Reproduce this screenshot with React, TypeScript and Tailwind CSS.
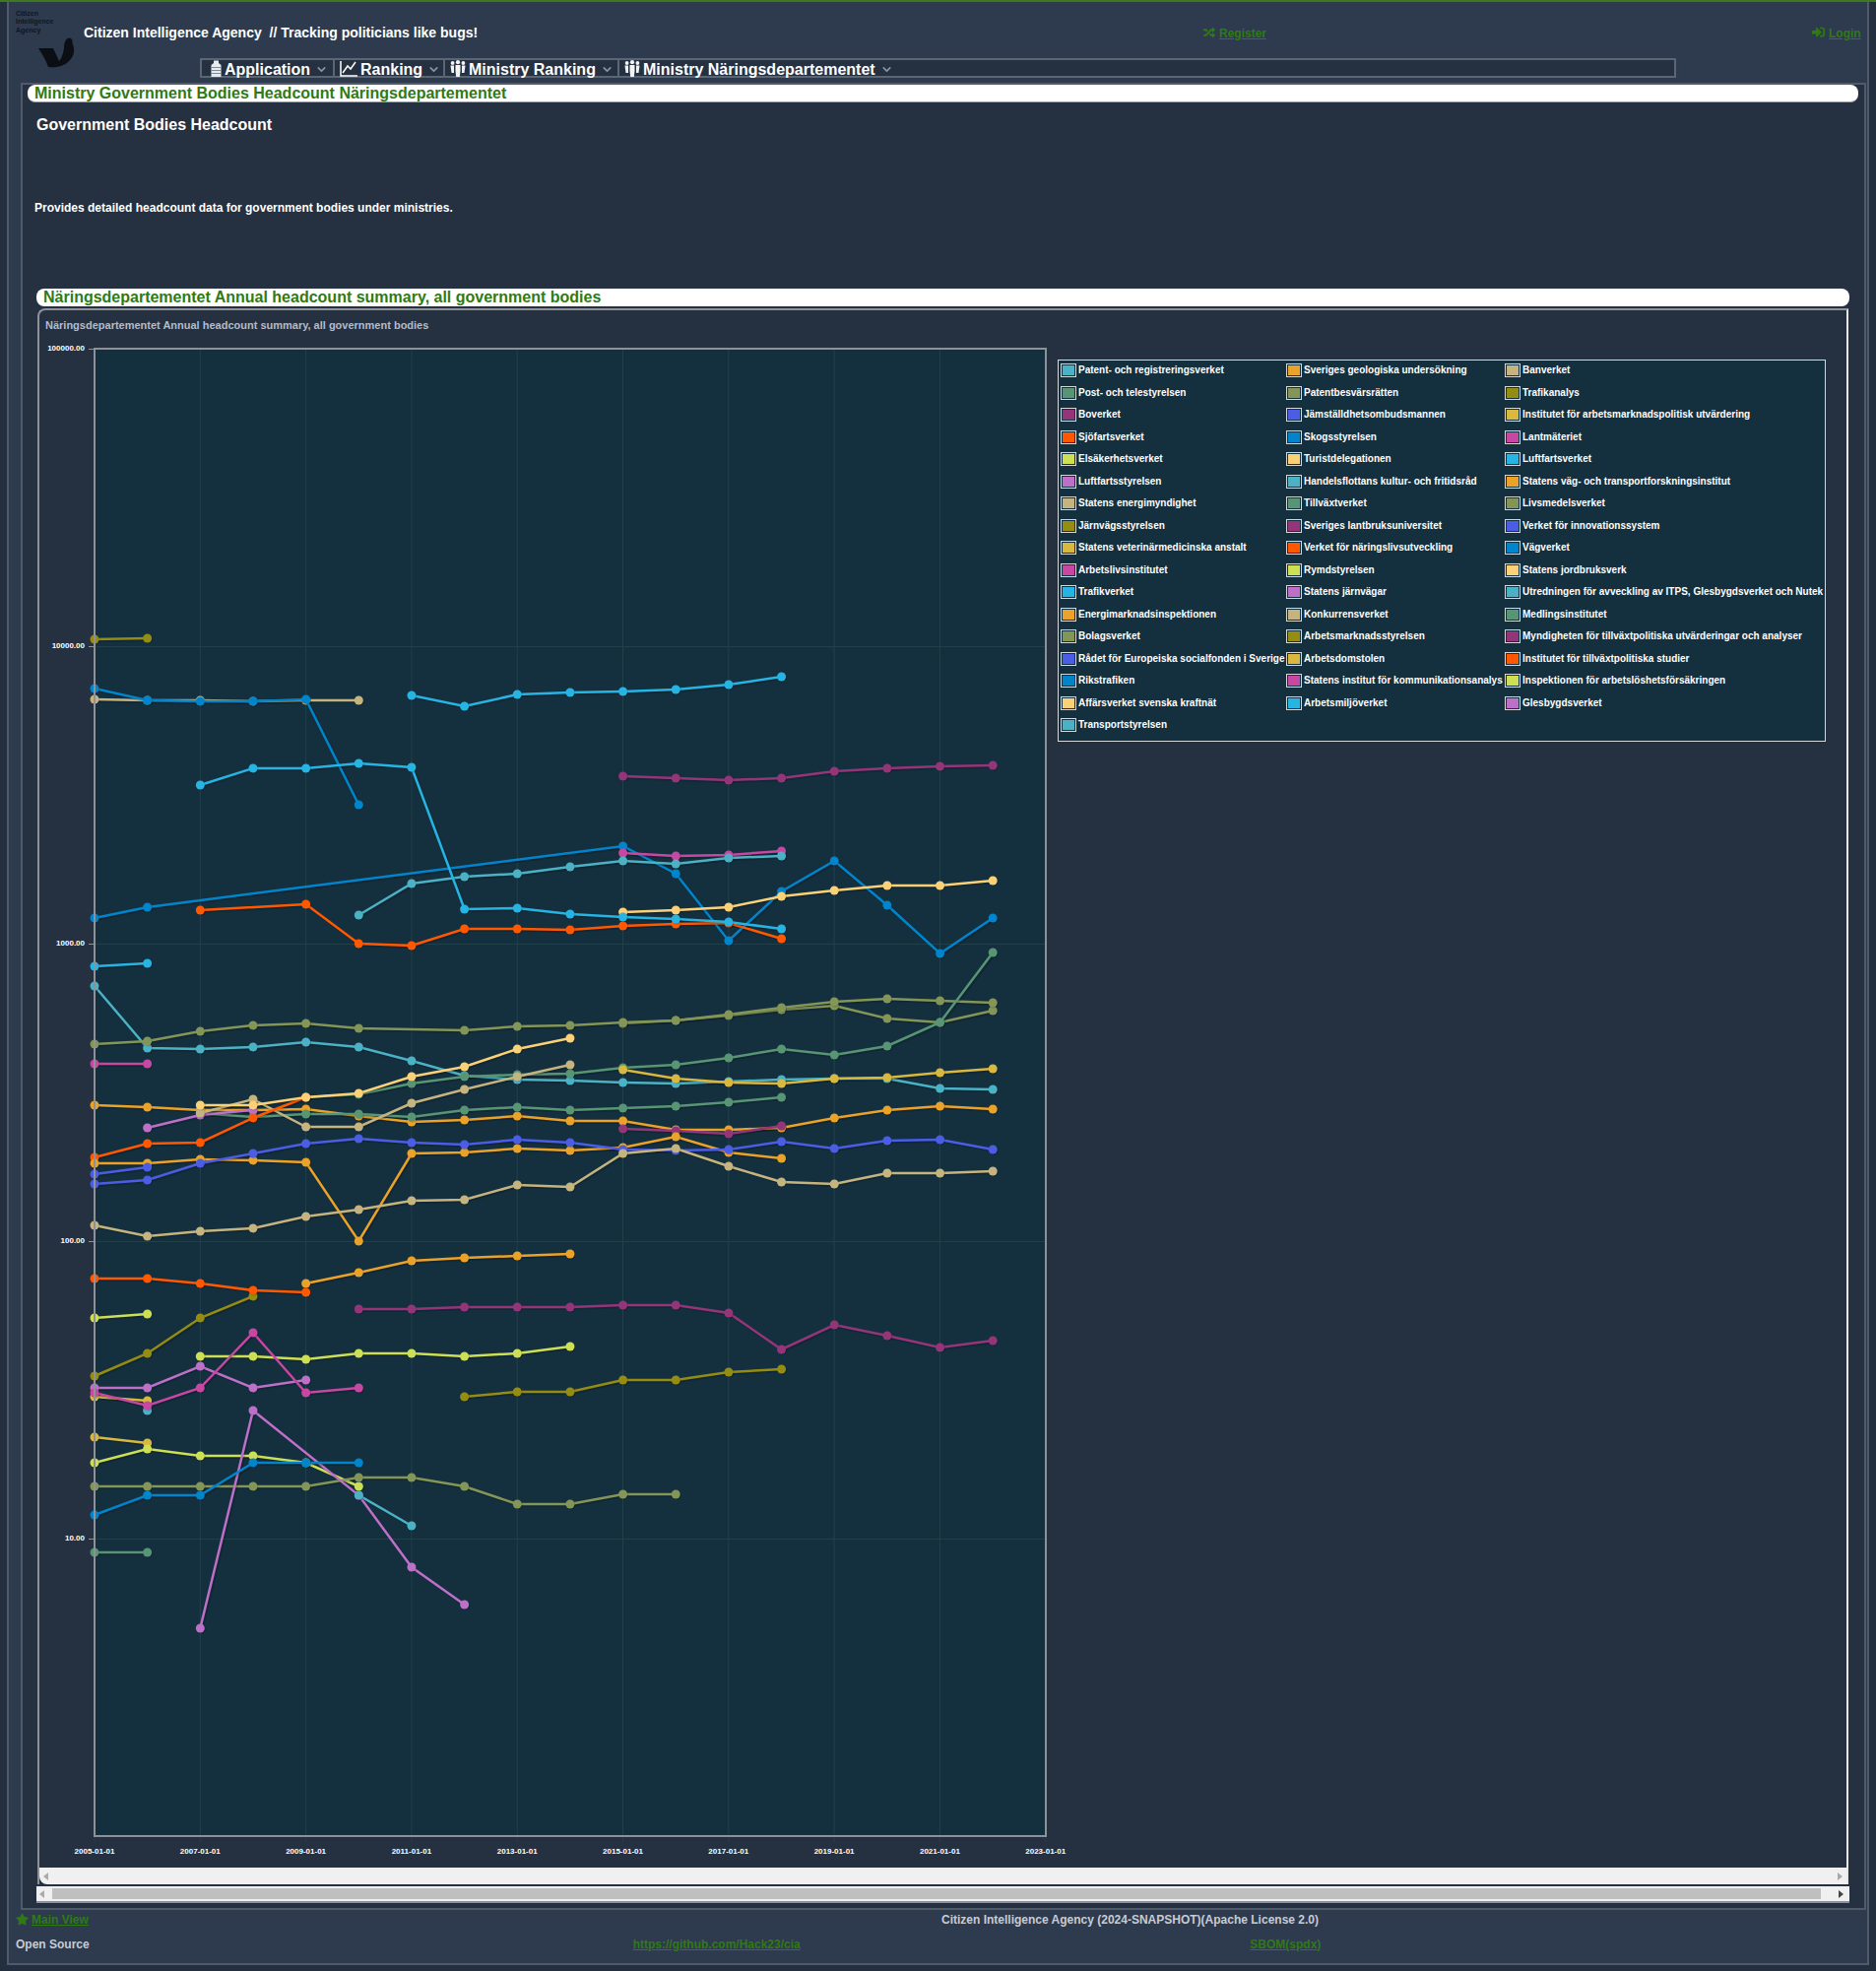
import React from "react";
import { FaRandom, FaSignInAlt, FaStar } from "react-icons/fa";
import { ChevronDown } from "lucide-react";

const A = "#4bb2c5";
const B = "#EAA228";
const C = "#c5b47f";
const D = "#579575";
const E = "#839557";
const F = "#958c12";
const G = "#953579";
const H = "#4b5de4";
const I = "#d8b83f";
const J = "#ff5800";
const K = "#0085cc";
const L = "#c747a3";
const M = "#cddf54";
const N = "#FBD178";
const O = "#26B4E3";
const P = "#bd70c7";

const legend: [string, string][] = [
  [A, "Patent- och registreringsverket"], [B, "Sveriges geologiska undersökning"], [C, "Banverket"],
  [D, "Post- och telestyrelsen"], [E, "Patentbesvärsrätten"], [F, "Trafikanalys"],
  [G, "Boverket"], [H, "Jämställdhetsombudsmannen"], [I, "Institutet för arbetsmarknadspolitisk utvärdering"],
  [J, "Sjöfartsverket"], [K, "Skogsstyrelsen"], [L, "Lantmäteriet"],
  [M, "Elsäkerhetsverket"], [N, "Turistdelegationen"], [O, "Luftfartsverket"],
  [P, "Luftfartsstyrelsen"], [A, "Handelsflottans kultur- och fritidsråd"], [B, "Statens väg- och transportforskningsinstitut"],
  [C, "Statens energimyndighet"], [D, "Tillväxtverket"], [E, "Livsmedelsverket"],
  [F, "Järnvägsstyrelsen"], [G, "Sveriges lantbruksuniversitet"], [H, "Verket för innovationssystem"],
  [I, "Statens veterinärmedicinska anstalt"], [J, "Verket för näringslivsutveckling"], [K, "Vägverket"],
  [L, "Arbetslivsinstitutet"], [M, "Rymdstyrelsen"], [N, "Statens jordbruksverk"],
  [O, "Trafikverket"], [P, "Statens järnvägar"], [A, "Utredningen för avveckling av ITPS, Glesbygdsverket och Nutek"],
  [B, "Energimarknadsinspektionen"], [C, "Konkurrensverket"], [D, "Medlingsinstitutet"],
  [E, "Bolagsverket"], [F, "Arbetsmarknadsstyrelsen"], [G, "Myndigheten för tillväxtpolitiska utvärderingar och analyser"],
  [H, "Rådet för Europeiska socialfonden i Sverige"], [I, "Arbetsdomstolen"], [J, "Institutet för tillväxtpolitiska studier"],
  [K, "Rikstrafiken"], [L, "Statens institut för kommunikationsanalys"], [M, "Inspektionen för arbetslöshetsförsäkringen"],
  [N, "Affärsverket svenska kraftnät"], [O, "Arbetsmiljöverket"], [P, "Glesbygdsverket"],
  [A, "Transportstyrelsen"],
];

// [color, points as "yearIndex:pageY"]
const series: [string, string][] = [
  [F, "0:649 1:648"],
  [C, "0:710 1:711 2:711 3:712 4:711 5:711"],
  [K, "0:699 1:711 2:712 3:712 4:710 5:817"],
  [O, "6:706 7:717 8:705 9:703 10:702 11:700 12:695 13:687"],
  [G, "10:788 11:790 12:792 13:790 14:783 15:780 16:778 17:777"],
  [K, "0:932 1:921 10:859 11:887 12:955 13:905 14:874 15:919 16:968 17:932"],
  [L, "10:866 11:869 12:868 13:864"],
  [A, "5:929 6:897 7:890 8:887 9:880 10:874 11:877 12:871 13:869"],
  [J, "2:924 4:918 5:958 6:960 7:943 8:943 9:944 10:940 11:938 12:937 13:953"],
  [N, "10:926 11:924 12:921 13:910 14:904 15:899 16:899 17:894"],
  [O, "2:797 3:780 4:780 5:775 6:779 7:923 8:922 9:928 10:931 11:933 12:936 13:943"],
  [O, "0:981 1:978"],
  [A, "0:1001 1:1064 2:1065 3:1063 4:1058 5:1063 6:1077 7:1092 8:1096 9:1097 10:1099 11:1100 12:1098 13:1096 14:1095 15:1095 16:1105 17:1106"],
  [E, "10:1039 11:1036 12:1031 13:1025 14:1021 15:1034 16:1038 17:1026"],
  [E, "0:1060 1:1057 2:1047 3:1041 4:1039 5:1044 7:1046 8:1042 9:1041 10:1038 11:1036 12:1030 13:1023 14:1017 15:1014 16:1016 17:1018"],
  [L, "0:1080 1:1080"],
  [B, "0:1122 1:1124 2:1127 3:1127 4:1126 5:1133 6:1139 7:1137 8:1133 9:1138 10:1138 11:1147 12:1147 13:1145 14:1135 15:1127 16:1123 17:1126"],
  [D, "2:1130 3:1134 4:1131 5:1131 6:1134 7:1127 8:1124 9:1127 10:1125 11:1123 12:1119 13:1114"],
  [D, "4:1114 5:1111 6:1100 7:1093 8:1091 9:1090 10:1084 11:1081 12:1074 13:1065 14:1071 15:1062 16:1038 17:967"],
  [P, "1:1145 2:1132 3:1127"],
  [C, "2:1130 3:1116 4:1144 5:1144 6:1120 7:1106 8:1093 9:1081"],
  [J, "0:1175 1:1161 2:1160 3:1135 4:1114"],
  [N, "2:1122 3:1122 4:1114 5:1110 6:1093 7:1083 8:1065 9:1054"],
  [I, "10:1086 11:1095 12:1099 13:1100 14:1095 15:1094 16:1089 17:1085"],
  [G, "10:1146 11:1148 12:1151 13:1143"],
  [B, "0:1181 1:1181 2:1177 3:1178 4:1180 5:1260 6:1171 7:1170 8:1166 9:1168 10:1165 11:1154 12:1170 13:1176"],
  [H, "0:1192 1:1185"],
  [H, "0:1202 1:1198 2:1181 3:1171 4:1161 5:1156 6:1160 7:1162 8:1157 9:1160 10:1167 11:1168 12:1167 13:1159 14:1166 15:1158 16:1157 17:1167"],
  [C, "0:1244 1:1255 2:1250 3:1247 4:1235 5:1228 6:1219 7:1218 8:1203 9:1205 10:1171 11:1166 12:1184 13:1200 14:1202 15:1191 16:1191 17:1189"],
  [F, "0:1397 1:1374 2:1338 3:1316"],
  [J, "0:1298 1:1298 2:1303 3:1310 4:1312"],
  [B, "4:1303 5:1292 6:1280 7:1277 8:1275 9:1273"],
  [M, "0:1338 1:1334"],
  [G, "5:1329 6:1329 7:1327 8:1327 9:1327 10:1325 11:1325 12:1333 13:1370 14:1345 15:1356 16:1368 17:1361"],
  [M, "2:1377 3:1377 4:1380 5:1374 6:1374 7:1377 8:1374 9:1367"],
  [F, "7:1418 8:1413 9:1413 10:1401 11:1401 12:1393 13:1390"],
  [I, "0:1418 1:1422"],
  [A, "1:1432"],
  [P, "0:1409 1:1409 2:1387 3:1409 4:1401"],
  [L, "0:1414 1:1427 2:1409 3:1353 4:1414 5:1409"],
  [I, "0:1459 1:1465"],
  [M, "0:1485 1:1471 2:1478 3:1478 4:1485 5:1509"],
  [E, "0:1509 1:1509 2:1509 3:1509 4:1509 5:1500 6:1500 7:1509 8:1527 9:1527 10:1517 11:1517"],
  [P, "2:1653 3:1432 5:1518 6:1591 7:1629"],
  [K, "0:1538 1:1518 2:1518 3:1485 4:1485 5:1485"],
  [A, "5:1518 6:1549"],
  [D, "0:1576 1:1576"],
];

const yLabels: [string, number][] = [
  ["100000.00", 354],
  ["10000.00", 656],
  ["1000.00", 958],
  ["100.00", 1260],
  ["10.00", 1562],
];

const years = ["2005", "2007", "2009", "2011", "2013", "2015", "2017", "2019", "2021", "2023"];
const xOf = (i: number) => 96 + i * 53.66;

function parse(points: string) {
  return points.split(" ").map((s) => {
    const [i, y] = s.split(":").map(Number);
    return [xOf(i), y] as [number, number];
  });
}

function Chart() {
  return (
    <svg viewBox="40 340 1034 1556" width={1034} height={1556} className="shrink-0 block overflow-visible">
      <rect x={96} y={354} width={966} height={1510} fill="#142f3e" />
      {years.map((y, n) => {
        const x = 96 + n * 107.3;
        return <line key={y} x1={x} x2={x} y1={354} y2={1870} stroke="#22404a" strokeWidth={1} />;
      })}
      {yLabels.map(([t, y]) => (
        <g key={t}>
          <line x1={96} x2={1062} y1={y + 0.5} y2={y + 0.5} stroke="#22404a" strokeWidth={1} />
          <line x1={90} x2={96} y1={y + 0.5} y2={y + 0.5} stroke="#8d9299" strokeWidth={1} />
          <text x={86} y={y + 1.5} textAnchor="end" fontSize={8} fontWeight={700} fill="#ffffff">
            {t}
          </text>
        </g>
      ))}
      {years.map((y, n) => (
        <text key={y} x={96 + n * 107.3} y={1882} textAnchor="middle" fontSize={8} fontWeight={700} fill="#ffffff">
          {y}-01-01
        </text>
      ))}
      {series.map(([c, p], n) => {
        const pts = parse(p);
        const line = pts.map(([x, y]) => `${x},${y}`).join(" ");
        return (
          <g key={n}>
            <polyline points={line} fill="none" stroke="#000" strokeOpacity={0.15} strokeWidth={3} transform="translate(1.5 1.5)" />
            <polyline points={line} fill="none" stroke={c} strokeWidth={2.5} />
            {pts.map(([x, y], j) => (
              <g key={j}>
                <circle cx={x + 1} cy={y + 1} r={4.5} fill="#000" fillOpacity={0.15} />
                <circle cx={x} cy={y} r={4.5} fill={c} />
              </g>
            ))}
          </g>
        );
      })}
      <rect x={96} y={354} width={966} height={1510} fill="none" stroke="#8d9299" strokeWidth={2} />
    </svg>
  );
}

function Legend() {
  return (
    <div className="mt-[25px] w-[780px] h-[388px] shrink-0 bg-[#142f3e] border border-[#d5d8da] pl-[2px] pt-[3px] grid grid-cols-[229px_222px_1fr] auto-rows-[22.5px] content-start">
      {legend.map(([c, t]) => (
        <div key={t} className="flex items-start gap-[2px] text-[10px] leading-[14px] font-bold text-white whitespace-nowrap">
          <span className="w-[16px] h-[14px] border border-[#d5d8da] p-[1px] shrink-0">
            <span className="block w-full h-full" style={{ backgroundColor: c }} />
          </span>
          {t}
        </div>
      ))}
    </div>
  );
}

function Arrow({ dir, dark }: { dir: "l" | "r"; dark?: boolean }) {
  return (
    <svg width="5" height="8" viewBox="0 0 5 8" className="shrink-0">
      <polygon points={dir === "l" ? "5,0 5,8 0,4" : "0,0 0,8 5,4"} fill={dark ? "#444" : "#aaa"} />
    </svg>
  );
}

function AppIcon() {
  return (
    <svg width="11" height="17" viewBox="0 0 11 17" className="shrink-0">
      <path d="M3 0.5 H8 V3 L10.5 5 V17 H0.5 V5 L3 3 Z" fill="#e8eaec" />
      <path d="M0.5 7.5 H10.5 M0.5 10.5 H10.5 M0.5 13.5 H10.5" stroke="#7f8a97" strokeWidth={1} />
    </svg>
  );
}

function LineIcon() {
  return (
    <svg width="18" height="17" viewBox="0 0 18 17" className="shrink-0" fill="none">
      <path d="M1 1 V16 H18" stroke="#fff" strokeWidth={1.5} />
      <path d="M3 13 L8 6 L11 9 L16 2" stroke="#fff" strokeWidth={1.5} />
    </svg>
  );
}

function GroupIcon() {
  return (
    <svg width="16" height="17" viewBox="0 0 16 17" className="shrink-0" fill="#f2f3f4">
      <circle cx="2.6" cy="3" r="1.9" />
      <circle cx="8" cy="2.2" r="2.1" />
      <circle cx="13.4" cy="3" r="1.9" />
      <path d="M0.5 5.5 H4 V13 H1.5 Z" />
      <path d="M5.5 5 H10.5 V11 L9.8 17 H6.2 L5.5 11 Z" />
      <path d="M12 5.5 H15.5 L14.5 13 H12 Z" />
    </svg>
  );
}

function MenuItem({ icon, label, className }: { icon: React.ReactNode; label: string; className: string }) {
  return (
    <div className={`flex items-center h-full ${className}`}>
      {icon}
      <span className="text-[16px] font-bold text-white leading-none pt-[4px] ml-[3px]">{label}</span>
      <ChevronDown size={13} strokeWidth={3} className="text-[#8b95a3] ml-[5px] mt-[3px]" />
    </div>
  );
}

export default function App() {
  return (
    <div className="w-[1905px] h-[2001px] overflow-hidden bg-[#232f3e] border-t-2 border-[#3d7a1f] font-['Liberation_Sans',Arial,sans-serif] pb-[6px] px-[7px]">
      <div className="h-[1993px] bg-[#2e3b4e] border-x-2 border-b-2 border-[#4f5b6b]">
        {/* header */}
        <div className="flex h-[82px]">
          <div className="w-[76px] shrink-0 pl-[7px] pt-[8px]">
            <div className="text-[7px] font-bold leading-[8.3px] text-[#10161f]">
              Citizen
              <br />
              Intelligence
              <br />
              Agency
            </div>
            <svg width="40" height="32" viewBox="0 0 40 32" className="ml-[22px] mt-[3px]">
              <path
                d="M1 11 L16 11 L22 24 C25 21 26 16 27 11 C27 7 28 1 32 0.5 C35 0.5 36 3 35.5 6 C38 11 38 18 33 23 C28 29 20 31 11 30 C9 24 5 17 1 11 Z"
                fill="#0b0e12"
              />
            </svg>
          </div>
          <div className="flex-1 min-w-0">
            <div className="h-[57px] flex items-start pt-[23px]">
              <span className="text-[14px] font-bold text-white leading-[16px] whitespace-pre w-[1137px] shrink-0">
                Citizen Intelligence Agency  // Tracking politicians like bugs!
              </span>
              <a className="flex items-center gap-[4px] text-[12px] leading-[16px] font-bold text-[#2f7a14] underline w-[618px] shrink-0 pt-[1px]">
                <FaRandom size={12} className="-mt-[3px]" />
                Register
              </a>
              <a className="flex items-center gap-[4px] text-[12px] leading-[16px] font-bold text-[#2f7a14] underline pt-[1px]">
                <FaSignInAlt size={13} className="-mt-[3px]" />
                Login
              </a>
            </div>
            <div className="ml-[118px] w-[1499px] h-[20px] bg-[#253041] border-2 border-[#5b6675] flex items-center">
              <MenuItem icon={<AppIcon />} label="Application" className="w-[135px] pl-[9px] border-r-2 border-[#5b6675]" />
              <MenuItem icon={<LineIcon />} label="Ranking" className="w-[112px] pl-[5px] border-r-2 border-[#5b6675]" />
              <MenuItem icon={<GroupIcon />} label="Ministry Ranking" className="w-[177px] pl-[5px] border-r-2 border-[#5b6675]" />
              <MenuItem icon={<GroupIcon />} label="Ministry Näringsdepartementet" className="pl-[5px]" />
            </div>
          </div>
        </div>

        {/* main panel */}
        <div className="ml-[12px] mr-[1px] h-[1855px] bg-[#253041] border-2 border-[#4f5b6b]">
          <div className="ml-[5px] mr-[6px] h-[18px] bg-white rounded-lg px-[7px] text-[16px] leading-[18px] font-bold text-[#2f7a14] border-b border-[#9aa2ac]">
            Ministry Government Bodies Headcount Näringsdepartementet
          </div>
          <div className="ml-[14px] mt-[14px] text-[16px] leading-[18px] font-bold text-white">Government Bodies Headcount</div>
          <div className="ml-[12px] mt-[69px] text-[12px] leading-[13px] font-bold text-white">
            Provides detailed headcount data for government bodies under ministries.
          </div>
          <div className="mt-[75px] ml-[14px] mr-[15px] h-[18px] bg-white rounded-lg px-[7px] text-[16px] leading-[18px] font-bold text-[#2f7a14]">
            Näringsdepartementet Annual headcount summary, all government bodies
          </div>

          {/* chart frame */}
          <div className="mt-[2px] ml-[15px] mr-[16px] border-t-2 border-l-2 border-[#8d9299] border-r-2 border-r-[#e8e8e8] rounded-tl-lg">
            <div className="h-[25px] pl-[6px] pt-[6px] flex items-center text-[11px] font-bold text-[#b3bcc9]">
              Näringsdepartementet Annual headcount summary, all government bodies
            </div>
            <div className="flex items-start h-[1556px]">
              <Chart />
              <Legend />
            </div>
            <div className="h-[17px] bg-[#f0f0f0] rounded-bl-lg flex items-center justify-between px-[4px]">
              <Arrow dir="l" />
              <Arrow dir="r" />
            </div>
          </div>
          <div className="mt-[2px] ml-[14px] mr-[15px] h-[17px] bg-[#f0f0f0] border-b-2 border-[#8d9299] flex items-center px-[3px]">
            <Arrow dir="l" />
            <div className="flex-1 h-[11px] bg-[#bfbfbf] ml-[8px] mr-[18px]" />
            <Arrow dir="r" dark />
            <div className="w-[3px]" />
          </div>
        </div>

        {/* footer */}
        <div className="pl-[7px]">
          <div className="grid grid-cols-2 w-[1880px] h-[20px] items-center">
            <a className="flex items-center gap-[3px] text-[12px] font-bold text-[#2f7a14] underline">
              <FaStar size={13} className="-mt-[2px]" />
              Main View
            </a>
            <span className="text-[12px] font-bold text-[#c8ccd4]">Citizen Intelligence Agency (2024-SNAPSHOT)(Apache License 2.0)</span>
          </div>
          <div className="grid grid-cols-3 w-[1880px] h-[30px] items-center text-[12px] font-bold">
            <span className="text-[#c8ccd4]">Open Source</span>
            <a className="text-[#2f7a14] underline">https://github.com/Hack23/cia</a>
            <a className="text-[#2f7a14] underline">SBOM(spdx)</a>
          </div>
        </div>
      </div>
    </div>
  );
}
